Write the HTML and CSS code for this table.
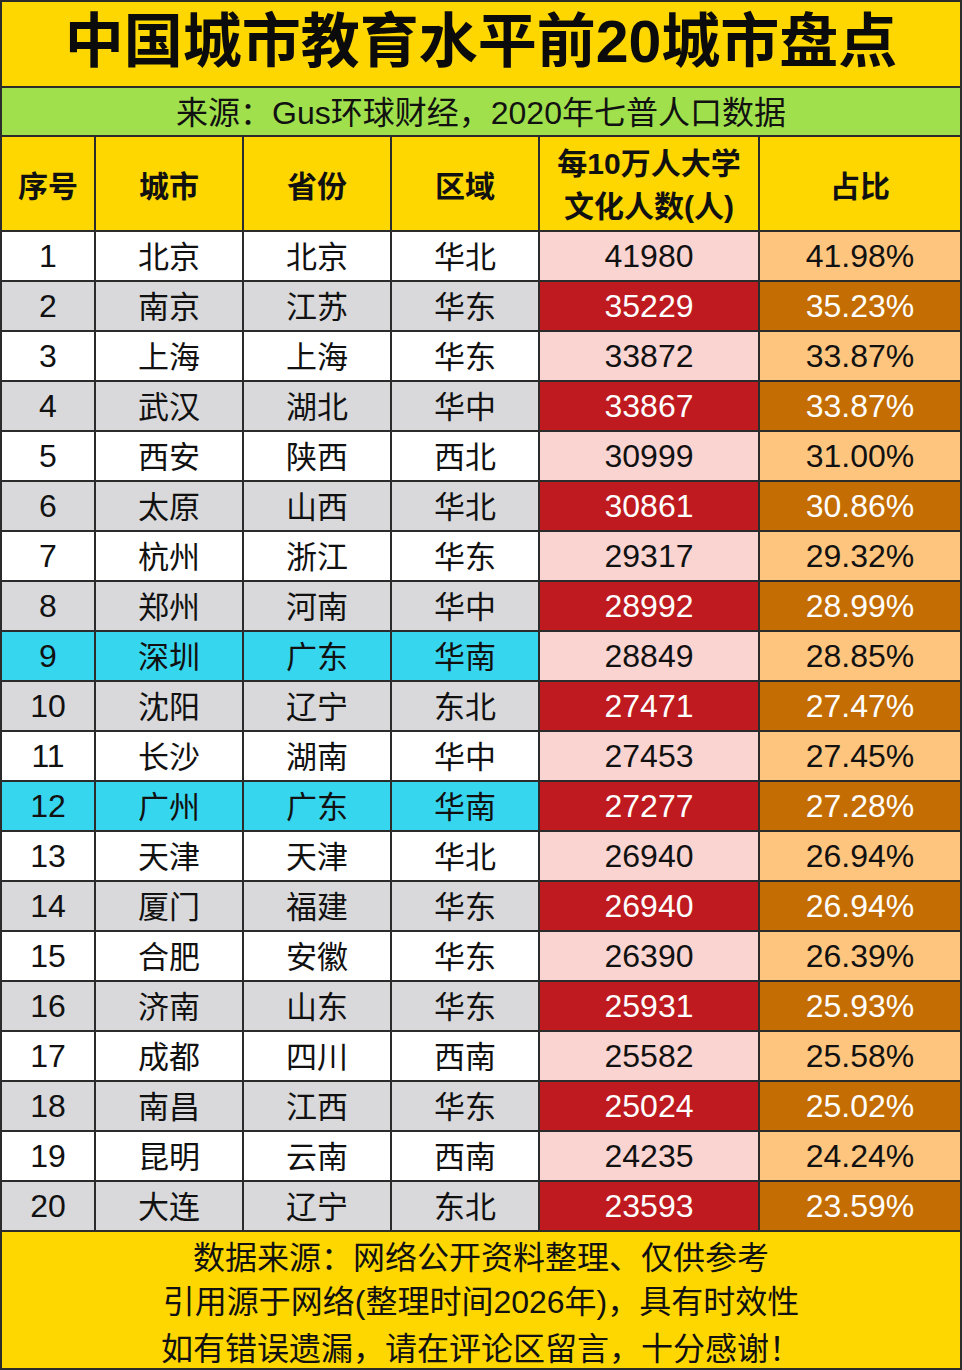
FILE: index.html
```html
<!DOCTYPE html>
<html lang="zh-CN">
<head>
<meta charset="utf-8">
<title>中国城市教育水平前20城市盘点</title>
<link rel="stylesheet" href="styles.css">
</head>
<body>
<div class="sheet">
  <div class="title"><span>中国城市教育水平前20城市盘点</span></div>
  <div class="subtitle"><span>来源：<span class="lat">Gus</span>环球财经，<span class="lat">2020</span>年七普人口数据</span></div>

  <div class="hd">序号</div>
  <div class="hd">城市</div>
  <div class="hd">省份</div>
  <div class="hd">区域</div>
  <div class="hd hd-two"><span>每<span class="lat">10</span>万人大学<br>文化人数<span class="lat">(</span>人<span class="lat">)</span></span></div>
  <div class="hd">占比</div>

  <div class="c d odd">1</div><div class="c odd">北京</div><div class="c odd">北京</div><div class="c odd">华北</div><div class="c d n-odd">41980</div><div class="c d p-odd">41.98%</div>
  <div class="c d even">2</div><div class="c even">南京</div><div class="c even">江苏</div><div class="c even">华东</div><div class="c d n-even">35229</div><div class="c d p-even">35.23%</div>
  <div class="c d odd">3</div><div class="c odd">上海</div><div class="c odd">上海</div><div class="c odd">华东</div><div class="c d n-odd">33872</div><div class="c d p-odd">33.87%</div>
  <div class="c d even">4</div><div class="c even">武汉</div><div class="c even">湖北</div><div class="c even">华中</div><div class="c d n-even">33867</div><div class="c d p-even">33.87%</div>
  <div class="c d odd">5</div><div class="c odd">西安</div><div class="c odd">陕西</div><div class="c odd">西北</div><div class="c d n-odd">30999</div><div class="c d p-odd">31.00%</div>
  <div class="c d even">6</div><div class="c even">太原</div><div class="c even">山西</div><div class="c even">华北</div><div class="c d n-even">30861</div><div class="c d p-even">30.86%</div>
  <div class="c d odd">7</div><div class="c odd">杭州</div><div class="c odd">浙江</div><div class="c odd">华东</div><div class="c d n-odd">29317</div><div class="c d p-odd">29.32%</div>
  <div class="c d even">8</div><div class="c even">郑州</div><div class="c even">河南</div><div class="c even">华中</div><div class="c d n-even">28992</div><div class="c d p-even">28.99%</div>
  <div class="c d hl">9</div><div class="c hl">深圳</div><div class="c hl">广东</div><div class="c hl">华南</div><div class="c d n-odd">28849</div><div class="c d p-odd">28.85%</div>
  <div class="c d even">10</div><div class="c even">沈阳</div><div class="c even">辽宁</div><div class="c even">东北</div><div class="c d n-even">27471</div><div class="c d p-even">27.47%</div>
  <div class="c d odd">11</div><div class="c odd">长沙</div><div class="c odd">湖南</div><div class="c odd">华中</div><div class="c d n-odd">27453</div><div class="c d p-odd">27.45%</div>
  <div class="c d hl">12</div><div class="c hl">广州</div><div class="c hl">广东</div><div class="c hl">华南</div><div class="c d n-even">27277</div><div class="c d p-even">27.28%</div>
  <div class="c d odd">13</div><div class="c odd">天津</div><div class="c odd">天津</div><div class="c odd">华北</div><div class="c d n-odd">26940</div><div class="c d p-odd">26.94%</div>
  <div class="c d even">14</div><div class="c even">厦门</div><div class="c even">福建</div><div class="c even">华东</div><div class="c d n-even">26940</div><div class="c d p-even">26.94%</div>
  <div class="c d odd">15</div><div class="c odd">合肥</div><div class="c odd">安徽</div><div class="c odd">华东</div><div class="c d n-odd">26390</div><div class="c d p-odd">26.39%</div>
  <div class="c d even">16</div><div class="c even">济南</div><div class="c even">山东</div><div class="c even">华东</div><div class="c d n-even">25931</div><div class="c d p-even">25.93%</div>
  <div class="c d odd">17</div><div class="c odd">成都</div><div class="c odd">四川</div><div class="c odd">西南</div><div class="c d n-odd">25582</div><div class="c d p-odd">25.58%</div>
  <div class="c d even">18</div><div class="c even">南昌</div><div class="c even">江西</div><div class="c even">华东</div><div class="c d n-even">25024</div><div class="c d p-even">25.02%</div>
  <div class="c d odd">19</div><div class="c odd">昆明</div><div class="c odd">云南</div><div class="c odd">西南</div><div class="c d n-odd">24235</div><div class="c d p-odd">24.24%</div>
  <div class="c d even">20</div><div class="c even">大连</div><div class="c even">辽宁</div><div class="c even">东北</div><div class="c d n-even">23593</div><div class="c d p-even">23.59%</div>

  <div class="footer">
    <div>数据来源：网络公开资料整理、仅供参考</div>
    <div>引用源于网络<span class="lat">(</span>整理时间<span class="lat">2026</span>年<span class="lat">)</span>，具有时效性</div>
    <div>如有错误遗漏，请在评论区留言，十分感谢！</div>
  </div>
</div>
</body>
</html>
```

FILE: styles.css
```css
html, body {
  margin: 0;
  padding: 0;
  background: #2b2b2b;
}

.sheet {
  width: 962px;
  height: 1370px;
  box-sizing: border-box;
  padding: 2px;
  background: #2b2b2b;
  display: grid;
  grid-template-columns: 92px 146px 146px 146px 218px 200px;
  grid-template-rows: 84px 47px 93px repeat(20, 48px) 136px;
  gap: 2px;
  font-family: "Noto Sans CJK SC", sans-serif;
  color: #111;
}

.lat {
  font-family: "Liberation Sans", "Noto Sans CJK SC", sans-serif;
}

.title {
  grid-column: 1 / -1;
  background: #fed700;
  display: flex;
  align-items: center;
  justify-content: center;
  padding-bottom: 4px;
  font-family: "Liberation Sans", "Noto Sans CJK SC", sans-serif;
  font-size: 59px;
  font-weight: 700;
  line-height: 1.1;
  color: #0b0b0b;
}

.subtitle {
  grid-column: 1 / -1;
  background: #a0e04c;
  display: flex;
  align-items: center;
  justify-content: center;
  font-size: 32px;
  line-height: 1.2;
  color: #111;
}

.hd {
  background: #fed700;
  display: flex;
  align-items: center;
  justify-content: center;
  text-align: center;
  font-size: 30px;
  font-weight: 700;
  color: #111;
}

.hd-two {
  line-height: 41px;
}

.c {
  display: flex;
  align-items: center;
  justify-content: center;
  padding-bottom: 3px;
  font-size: 31px;
  line-height: 1.2;
  color: #111;
}

.d {
  padding-bottom: 0;
  font-family: "Liberation Sans", sans-serif;
  font-size: 32px;
}

.odd { background: #ffffff; }
.even { background: #d9d9db; }
.hl { background: #37d6ef; }

.n-odd { background: #fad4d1; }
.n-even { background: #be1a1f; color: #fff; }
.p-odd { background: #fec57f; }
.p-even { background: #c36d03; color: #fff; }

.footer {
  grid-column: 1 / -1;
  background: #fed700;
  display: flex;
  flex-direction: column;
  align-items: center;
  justify-content: center;
  font-size: 32px;
  line-height: 44px;
  color: #111;
}
```
